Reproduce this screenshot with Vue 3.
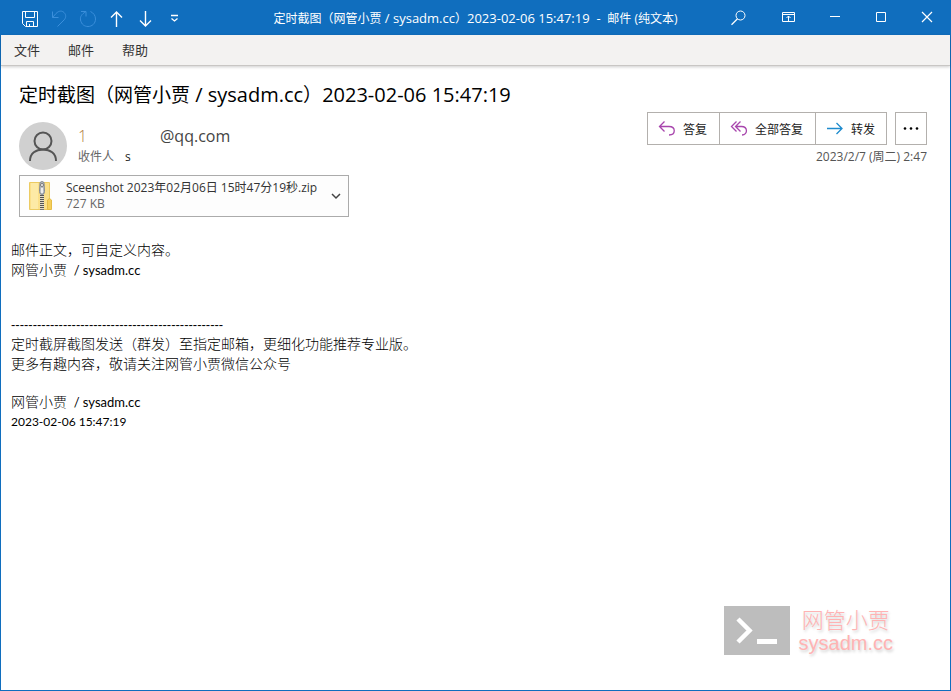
<script setup>
const menus = ['文件', '邮件', '帮助']
const rule = '-'.repeat(49)
</script>

<template>
  <div class="window">
    <header class="titlebar">
      <div class="quick">
        <button class="tool" aria-label="保存">
          <svg width="18" height="18" viewBox="0 0 18 18"><path d="M1.5 1.5h15v15h-12l-3-3z M4.5 1.5v6h9v-6 M5.5 16.5v-5h7v5 M8.5 14v2" /></svg>
        </button>
        <button class="tool" aria-label="撤消" disabled>
          <svg width="18" height="18" viewBox="0 0 18 18"><path d="M2.5 1.5v6h6 M2.5 7.5L6 3.5C9 .5 12 .5 14 2.5C16.5 5 16 8 14 10L7.5 16.5" /></svg>
        </button>
        <button class="tool" aria-label="恢复" disabled>
          <svg width="18" height="18" viewBox="0 0 18 18"><path d="M2 1.5h5v5 M6.5 2C2.5 4 1 7 1.5 10C2.5 14.5 5.5 16.5 9 16.5C13 16.5 16.5 13.5 16.5 9C16.5 5.5 14.5 3 11.5 1.5" /></svg>
        </button>
        <button class="tool" aria-label="上一封">
          <svg width="18" height="18" viewBox="0 0 18 18"><path d="M8.5 17V2 M3 7.5L8.5 2L14 7.5" stroke-width="1.4" /></svg>
        </button>
        <button class="tool" aria-label="下一封">
          <svg width="18" height="18" viewBox="0 0 18 18"><path d="M8.5 1v15 M3 10.5L8.5 16L14 10.5" stroke-width="1.4" /></svg>
        </button>
        <button class="tool" aria-label="自定义">
          <svg width="18" height="18" viewBox="0 0 18 18"><path d="M5 5.5h7 M5.5 8.5L8.5 11L11.5 8.5" stroke-width="1.3" /></svg>
        </button>
      </div>
      <div class="caption">定时截图（网管小贾<span class="caption-latin"> / sysadm.cc</span>）<span class="caption-latin">2023-02-06 15:47:19&nbsp; -&nbsp; </span>邮件 (纯文本)</div>
      <div class="controls">
        <button class="control" aria-label="搜索">
          <svg width="16" height="16" viewBox="0 0 16 16"><circle cx="9.500" cy="5.500" r="4.500" /><path d="M6.500 8.700L.5 14.700" stroke-width="1.300" /></svg>
        </button>
        <button class="control" aria-label="功能区显示选项">
          <svg width="16" height="16" viewBox="0 0 16 16"><path d="M1.500 2.500h12v9h-12z M1.500 4.500h12 M7.500 11V6 M5.500 8l2-2l2 2" /></svg>
        </button>
        <button class="control" aria-label="最小化">
          <svg width="16" height="16" viewBox="0 0 16 16"><path d="M3 6.500h10" /></svg>
        </button>
        <button class="control" aria-label="最大化">
          <svg width="16" height="16" viewBox="0 0 16 16"><path d="M3.500 2.500h9v9h-9z" /></svg>
        </button>
        <button class="control" aria-label="关闭">
          <svg width="16" height="16" viewBox="0 0 16 16"><path d="M3 2l10 10 M13 2L3 12" stroke-width="1.200" /></svg>
        </button>
      </div>
    </header>

    <nav class="menubar">
      <button v-for="m in menus" :key="m" class="menu">{{ m }}</button>
    </nav>

    <main class="message">
      <h1 class="subject">定时截图（网管小贾<span class="subject-latin"> / sysadm.cc</span>）<span class="subject-latin">2023-02-06 15:47:19</span></h1>

      <section class="meta">
        <svg class="avatar" width="48" height="48" viewBox="0 0 48 48">
          <circle cx="24" cy="24" r="24" fill="#d0d0d0" />
          <g fill="none" stroke="#555" stroke-width="2">
            <circle cx="24" cy="19" r="8.500" />
            <path d="M11 39C11 31 17 27.500 24 27.500S37 31 37 39" />
          </g>
        </svg>
        <div class="people">
          <div class="sender"><span class="account">1</span><span>@qq.com</span></div>
          <div class="recipient"><span>收件人</span><span class="who">s</span></div>
        </div>
        <div class="side">
          <div class="actions">
            <div class="group">
              <button class="action">
                <svg class="purple" width="18" height="18" viewBox="0 0 18 18"><path d="M6.500 1.500L1.500 6.500L6.500 11.500 M1.500 6.500H11C18 6.500 18 15 11 15" /></svg>
                答复
              </button>
              <button class="action">
                <svg class="purple" width="18" height="18" viewBox="0 0 18 18"><path d="M6.500 1.500L1.500 6.500L6.500 11.500 M10.500 1.500L5.500 6.500L10.500 11.500 M5.500 6.500H11.500C18 6.500 18 15 12 15" /></svg>
                全部答复
              </button>
              <button class="action">
                <svg class="blue" width="18" height="18" viewBox="0 0 18 18"><path d="M1 8.500H16 M10.500 3L16 8.500L10.500 14" /></svg>
                转发
              </button>
            </div>
            <button class="more" aria-label="更多操作">
              <svg width="16" height="4" viewBox="0 0 16 4"><circle cx="2" cy="1.500" r="1.300" /><circle cx="8" cy="1.500" r="1.300" /><circle cx="14" cy="1.500" r="1.300" /></svg>
            </button>
          </div>
          <time class="date">2023/2/7 (周二) 2:47</time>
        </div>
      </section>

      <button class="attachment">
        <svg width="24" height="30" viewBox="0 0 24 30">
          <path d="M.5 1.500h20v27H.5z" fill="#fbe08a" stroke="#eccb62" />
          <path d="M2 2h7v26H2z" fill="#fdeaa6" />
          <path d="M18.500 28.500V19l2-1.500l2 1.500v9.500z" fill="#f5cf5b" stroke="#e6bd47" />
          <path d="M11 1h4v28h-4z" fill="#e2dcc7" />
          <path d="M13 12v16" stroke="#555" stroke-width="4" stroke-dasharray="1 1" />
          <path d="M11 1.500q2-2 4 0l.5 9q0 3-2.500 3t-2.500-3z" fill="#b9bec5" stroke="#858a91" />
          <circle cx="13" cy="4" r="1.500" fill="#fff" stroke="#777" />
          <path d="M13 7v5" stroke="#eee" stroke-width="2" />
          <path d="M11 28.500h4" stroke="#777" />
        </svg>
        <span class="file">
          <span class="name">Sceenshot 2023年02月06日 15时47分19秒.zip</span>
          <span class="size">727 KB</span>
        </span>
        <svg class="chevron" width="10" height="8" viewBox="0 0 10 8"><path d="M1 2l4 4l4-4" /></svg>
      </button>

      <article class="body">
        <p>邮件正文，可自定义内容。</p>
        <p>网管小贾<span class="site">&nbsp; / sysadm.cc</span></p>
        <p class="gap">&nbsp;</p>
        <p class="gap">&nbsp;</p>
        <p class="gap rule">{{ rule }}</p>
        <p>定时截屏截图发送（群发）至指定邮箱，更细化功能推荐专业版。</p>
        <p>更多有趣内容，敬请关注网管小贾微信公众号</p>
        <p class="gap">&nbsp;</p>
        <p>网管小贾<span class="site">&nbsp; / sysadm.cc</span></p>
        <p class="stamp">2023-02-06 15:47:19</p>
      </article>

      <footer class="brand">
        <svg width="66" height="49" viewBox="0 0 66 49">
          <path d="M0 0h66v49H0z" fill="#bdbdbd" />
          <path d="M14 13l11.500 11.500L14 36" fill="none" stroke="#fff" stroke-width="4.500" />
          <path d="M33 33h20v5H33z" fill="#fff" />
        </svg>
        <div class="words">
          <div class="brand-name">网管小贾</div>
          <div class="brand-site">sysadm.cc</div>
        </div>
      </footer>
    </main>
  </div>
</template>

<style>
body {
  margin: 0;
}
</style>

<style scoped>
.window {
  box-sizing: border-box;
  min-height: 100vh;
  display: flex;
  flex-direction: column;
  border: 1px solid #106ebe;
  border-top: 0;
  background: #fff;
  color: #000;
  font-family: "Open Sans", "Noto Sans CJK SC", sans-serif;
}
button {
  margin: 0;
  padding: 0;
  border: 0;
  background: none;
  color: inherit;
  font: inherit;
}
svg {
  display: block;
  flex: none;
}
.titlebar {
  height: 35px;
  display: grid;
  grid-template-columns: 1fr auto 1fr;
  align-items: center;
  background: #106ebe;
  color: #fff;
  font-size: 12px;
}
.quick {
  display: flex;
  gap: 11px;
  padding: 2px 0 0 20px;
}
.titlebar svg {
  fill: none;
  stroke: #fff;
}
.tool:disabled svg {
  stroke: #3b8fdb;
}
.caption {
  white-space: nowrap;
}
.caption-latin {
  font-size: 13px;
}
.controls {
  display: flex;
  justify-content: flex-end;
}
.control {
  width: 46px;
  height: 35px;
  display: grid;
  place-items: center;
}
.control:first-child {
  width: 54px;
}
.menubar {
  height: 28px;
  display: flex;
  align-items: center;
  gap: 28px;
  padding: 0 13px 2px;
  border-bottom: 1px solid #c8c6c4;
  box-shadow: 0 1px 3px #0003;
  background: #f3f2f1;
  color: #333;
  font-size: 13px;
}
.message {
  flex: 1;
  display: flex;
  flex-direction: column;
}
.subject {
  margin: 13px 18px 1px;
  font-size: 19px;
  font-weight: 400;
  line-height: 32px;
}
.subject-latin {
  font-size: 20px;
}
.meta {
  display: flex;
  padding: 0 23px 0 18px;
}
.avatar {
  margin-top: 10px;
}
.people {
  flex: 1;
  padding: 13px 0 0 11px;
}
.sender {
  display: flex;
  font-size: 16px;
  line-height: 22px;
  color: #444;
}
.account {
  width: 82px;
  color: #b07a3c;
  font-weight: 300;
}
.recipient {
  display: flex;
  gap: 11px;
  padding-top: 1px;
  font-size: 12px;
  line-height: 18px;
  color: #666;
}
.who {
  color: #222;
}
.side {
  display: flex;
  flex-direction: column;
  align-items: flex-end;
}
.actions {
  display: flex;
  gap: 8px;
}
.group {
  display: flex;
  border: 1px solid #b3b0ad;
}
.action {
  height: 31px;
  display: flex;
  align-items: center;
  gap: 7px;
  padding: 0 12px 0 10px;
  color: #222;
  font-size: 12px;
  white-space: nowrap;
}
.action + .action {
  border-left: 1px solid #b3b0ad;
}
.action:last-child {
  padding-right: 11px;
}
.action svg {
  fill: none;
  stroke-width: 1.3;
}
.purple {
  stroke: #a846ad;
}
.blue {
  stroke: #1e8bcd;
}
.more {
  width: 32px;
  display: grid;
  place-items: center;
  border: 1px solid #b3b0ad;
}
.date {
  margin-top: 3px;
  font-size: 12px;
  line-height: 18px;
  color: #555;
}
.attachment {
  box-sizing: border-box;
  align-self: flex-start;
  width: 330px;
  height: 42px;
  margin: 5px 18px 0;
  padding: 0 7px 0 9px;
  display: flex;
  align-items: center;
  border: 1px solid #ababab;
  background: #fdfdfd;
  text-align: left;
}
.file {
  flex: 1;
  display: flex;
  flex-direction: column;
  padding-left: 13px;
  font-size: 12px;
  line-height: 16px;
  color: #333;
  white-space: nowrap;
}
.size {
  color: #666;
}
.chevron {
  fill: none;
  stroke: #444;
  stroke-width: 1.5;
}
.body {
  margin: 23px 10px 0;
  font-family: Lato, "Noto Sans CJK SC", sans-serif;
  font-size: 14px;
  font-weight: 300;
  line-height: 20px;
}
.body p {
  margin: 0;
}
.body .gap {
  line-height: 18px;
}
.rule {
  font-family: "Liberation Sans", Arial, sans-serif;
  font-size: 13px;
  font-weight: 400;
}
.site {
  font-size: 13px;
  font-weight: 400;
}
.stamp {
  font-size: 12px;
  font-weight: 400;
}
.brand {
  margin-top: auto;
  display: flex;
  align-items: center;
  justify-content: flex-end;
  gap: 9px;
  padding: 0 57px 35px 0;
}
.words {
  color: #ffb3b3;
  text-align: center;
  text-shadow: 1px 2px 3px #0003;
  font-size: 20px;
  line-height: 24px;
}
.brand-name {
  font-size: 22px;
  font-weight: 300;
}
.brand-site {
  font-family: "Liberation Sans", Arial, sans-serif;
}
</style>
